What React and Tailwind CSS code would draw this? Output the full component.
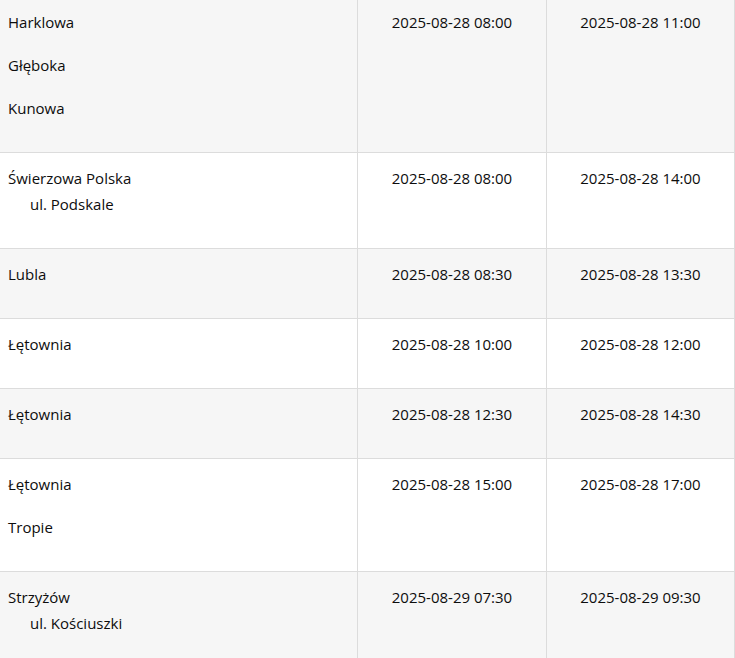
import React from "react";

const rows = [
    { places: [["Harklowa"], ["Głęboka"], ["Kunowa"]], start: "2025-08-28 08:00", end: "2025-08-28 11:00" },
    { places: [["Świerzowa Polska", "ul. Podskale"]], start: "2025-08-28 08:00", end: "2025-08-28 14:00" },
    { places: [["Lubla"]], start: "2025-08-28 08:30", end: "2025-08-28 13:30" },
    { places: [["Łętownia"]], start: "2025-08-28 10:00", end: "2025-08-28 12:00" },
    { places: [["Łętownia"]], start: "2025-08-28 12:30", end: "2025-08-28 14:30" },
    { places: [["Łętownia"], ["Tropie"]], start: "2025-08-28 15:00", end: "2025-08-28 17:00" },
    { places: [["Strzyżów", "ul. Kościuszki"]], start: "2025-08-29 07:30", end: "2025-08-29 09:30" },
];

const Row = ({ row, striped }) => {
    const bg = striped ? "bg-[#f6f6f6]" : "bg-white";
    return (
        <div className={`grid grid-cols-[358px_189px_188px] ${bg}`}>
            <div className="border-r border-b border-[#dcdcdc] pl-2 pt-[13px] pb-[13px]">
                {row.places.map((p, i) => (
                    <div key={i} className="mb-[19px]">
                        <div className="leading-6">{p[0]}</div>
                        {p[1] && <div className="leading-6 mt-[2px] pl-[22px]">{p[1]}</div>}
                    </div>
                ))}
            </div>
            <div className="border-r border-b border-[#dcdcdc] pt-[13px] text-center leading-6">{row.start}</div>
            <div className="border-r border-b border-[#dcdcdc] pt-[13px] text-center leading-6">{row.end}</div>
        </div>
    );
};

const App = () => {
    return (
        <div className="w-[735px] h-[658px] overflow-hidden bg-white text-[15px] text-[#0d0d0d]" style={{ fontFamily: '"Open Sans", "Noto Sans", sans-serif' }}>
            <div className="-mt-[3px]">
                {rows.map((row, i) => (
                    <Row key={i} row={row} striped={i % 2 === 0} />
                ))}
            </div>
        </div>
    );
};

export default App;
